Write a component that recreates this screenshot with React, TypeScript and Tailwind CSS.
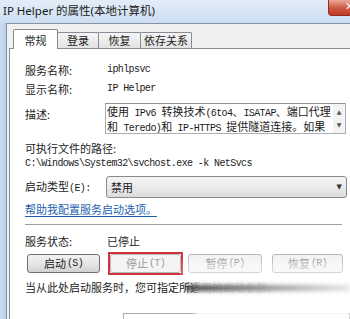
const cjk = "font-['Noto_Sans_CJK_SC',sans-serif] text-[11px]";
const mono = "font-['Liberation_Mono','Noto_Sans_CJK_SC',monospace] text-[10px] tracking-[-0.6px]";

function Label({ children, w = "w-[82px]" }: { children: React.ReactNode; w?: string }) {
  return <div className={`${w} shrink-0 ${cjk} leading-[14px] text-[#1b1b1b]`}>{children}</div>;
}

function WinButton({ label, keyName, disabled = false, w }: { label: string; keyName: string; disabled?: boolean; w: string }) {
  return (
    <div
      className={`${w} h-[19px] flex items-center justify-center rounded-[3px] border ${
        disabled
          ? "border-[#b5b9bc] bg-[#f4f4f4] text-[#9a9a9a]"
          : "border-[#707070] bg-gradient-to-b from-[#f2f2f2] via-[#e6e6e6] to-[#d2d2d2] text-[#1b1b1b]"
      }`}
    >
      <span className={cjk}>{label}</span>
      <span className={`${mono} ml-[1px]`}>({keyName})</span>
    </div>
  );
}

export default function App() {
  return (
    <div className="w-[350px] h-[319px] overflow-hidden relative flex flex-col bg-[#c6d9ee]">
      {/* title bar */}
      <div className="h-[23px] shrink-0 flex items-start bg-gradient-to-b from-[#e3edf8] to-[#cddef0] overflow-hidden">
        <div className="pl-[3px] pt-[3px] font-['Noto_Sans','Noto_Sans_CJK_SC',sans-serif] text-[11.5px] leading-[16px] text-[#1a1a1a] flex-1">
          IP Helper 的属性(本地计算机)
        </div>
        <div className="w-[43px] h-[16px] shrink-0 mr-[-21px] rounded-b-[4px] border border-t-0 border-[#8e2d24] bg-gradient-to-b from-[#e9a99c] via-[#cf5a45] to-[#c23a26] flex items-center justify-center text-white text-[11px] font-bold font-['DejaVu_Sans',sans-serif]">
          ✕
        </div>
      </div>

      <div className="flex flex-1 min-h-0">
        {/* window frame */}
        <div className="w-[6px] shrink-0 bg-gradient-to-r from-[#c9dbef] to-[#b9cfe8]" />

        <div className="flex-1 flex flex-col bg-[#f0f0f0] border-t border-l border-[#7f93ab] pl-[2px]">
          {/* tabs */}
          <div className="h-[24px] shrink-0 flex items-end pl-[4px]">
            <div className={`w-[45px] h-[20px] mb-[-1px] relative z-10 bg-white border border-b-0 border-[#898c95] rounded-t-[2px] flex items-center justify-center pt-[1px] ${cjk} text-[#1b1b1b]`}>
              常规
            </div>
            {[
              ["登录", "w-[42px]"],
              ["恢复", "w-[43px]"],
              ["依存关系", "w-[52px]"],
            ].map(([t, w]) => (
              <div
                key={t}
                className={`${w} h-[16px] ml-[-1px] first:ml-0 border border-b-0 border-[#898c95] rounded-t-[2px] bg-gradient-to-b from-[#f5f5f5] to-[#e3e3e3] flex items-center justify-center ${cjk} text-[#1b1b1b]`}
              >
                {t}
              </div>
            ))}
          </div>

          {/* page */}
          <div className="flex-1 bg-white border-t border-l border-[#898c95] flex flex-col pl-[15px] text-[#1b1b1b]">
            <div className="mt-[11px] h-[19px] flex items-center">
              <Label>服务名称:</Label>
              <span className={mono}>iphlpsvc</span>
            </div>
            <div className="h-[19px] flex items-center">
              <Label>显示名称:</Label>
              <span className={mono}>IP Helper</span>
            </div>

            <div className="mt-[5px] h-[31px] flex items-start">
              <div className="pt-[4px]">
                <Label w="w-[80px]">描述:</Label>
              </div>
              <div className="w-[241px] h-[31px] shrink-0 border border-[#abadb3] border-t-[#8f9296] bg-white flex">
                <div className="flex-1 pl-[1px] pt-[1px] leading-[11px] whitespace-nowrap overflow-hidden">
                  <div>
                    <span className={cjk}>使用</span>
                    <span className={mono}> IPv6 </span>
                    <span className={cjk}>转换技术</span>
                    <span className={mono}>(6to4</span>
                    <span className={cjk}>、</span>
                    <span className={mono}>ISATAP</span>
                    <span className={cjk}>、端口代理</span>
                  </div>
                  <div className="mt-[1px]">
                    <span className={cjk}>和</span>
                    <span className={mono}> Teredo)</span>
                    <span className={cjk}>和</span>
                    <span className={mono}> IP-HTTPS </span>
                    <span className={cjk}>提供隧道连接。如果</span>
                  </div>
                </div>
                <div className="w-[12px] shrink-0 bg-[#f3f3f3] flex flex-col items-center justify-between py-[4px] text-[#555] text-[6px] leading-[8px] font-['DejaVu_Sans',sans-serif]">
                  <span>▲</span>
                  <span>▼</span>
                </div>
              </div>
            </div>

            <div className="mt-[7px] h-[14px] flex items-center">
              <Label w="w-auto">可执行文件的路径:</Label>
            </div>
            <div className="mt-[1px] h-[14px] flex items-center">
              <span className={mono}>C:\Windows\System32\svchost.exe -k NetSvcs</span>
            </div>

            <div className="mt-[6px] h-[22px] flex items-center">
              <div className="w-[81px] shrink-0 leading-[14px]">
                <span className={cjk}>启动类型</span>
                <span className={mono}>(E):</span>
              </div>
              <div className="w-[241px] h-[22px] shrink-0 rounded-[3px] border border-[#8a8a8a] bg-gradient-to-b from-[#f4f4f4] via-[#ebebeb] to-[#dcdcdc] flex items-center pl-[4px] pr-[4px]">
                <span className={`${cjk} flex-1`}>禁用</span>
                <span className="text-[7px] text-[#333] font-['DejaVu_Sans',sans-serif]">▼</span>
              </div>
            </div>

            <div className="mt-[4px] h-[14px] flex items-center">
              <span className={`${cjk} text-[#1c5fae] underline underline-offset-2`}>帮助我配置服务启动选项。</span>
            </div>

            <div className="mt-[8px] w-[317px] h-[2px] border-t border-[#a0a0a0] border-b border-b-white" />

            <div className="mt-[8px] h-[14px] flex items-center">
              <Label>服务状态:</Label>
              <span className={cjk}>已停止</span>
            </div>

            <div className="mt-[4px] h-[23px] flex items-center">
              <div className="ml-[2px]">
                <WinButton label="启动" keyName="S" w="w-[73px]" />
              </div>
              <div className="ml-[8px] w-[75px] h-[23px] border-2 border-[#d2333a] flex items-center justify-center">
                <WinButton label="停止" keyName="T" disabled w="w-[71px]" />
              </div>
              <div className="ml-[5px]">
                <WinButton label="暂停" keyName="P" disabled w="w-[74px]" />
              </div>
              <div className="ml-[10px]">
                <WinButton label="恢复" keyName="R" disabled w="w-[71px]" />
              </div>
            </div>

            <div className="mt-[5px] h-[14px] flex items-center whitespace-nowrap">
              <span className={cjk}>当从此处启动服务时，您可指定所适用的启动参数。</span>
            </div>

            <div className="mt-[19px] h-[20px] flex items-start">
              <div className="w-[98px] shrink-0 pt-[4px] leading-[14px]">
                <span className={cjk}>启动参数</span>
                <span className={mono}>(M):</span>
              </div>
              <div className="flex-1 h-[20px] border border-[#abadb3] bg-white" />
            </div>
          </div>
        </div>
      </div>

      {/* watermark smear */}
      <div className="absolute left-[195px] top-[278px] w-[155px] h-[41px] bg-white/85 blur-[2px]" />
      <div className="absolute left-[182px] top-[262px] w-[168px] h-[16px] bg-white/40 blur-[2px]" />
      <div className="absolute left-[186px] top-[285px] w-[164px] h-[6px] bg-gradient-to-r from-[#2e2e2e] via-[#8c8c8c] to-[#e4e4e4] blur-[2px] opacity-90" />
    </div>
  );
}
